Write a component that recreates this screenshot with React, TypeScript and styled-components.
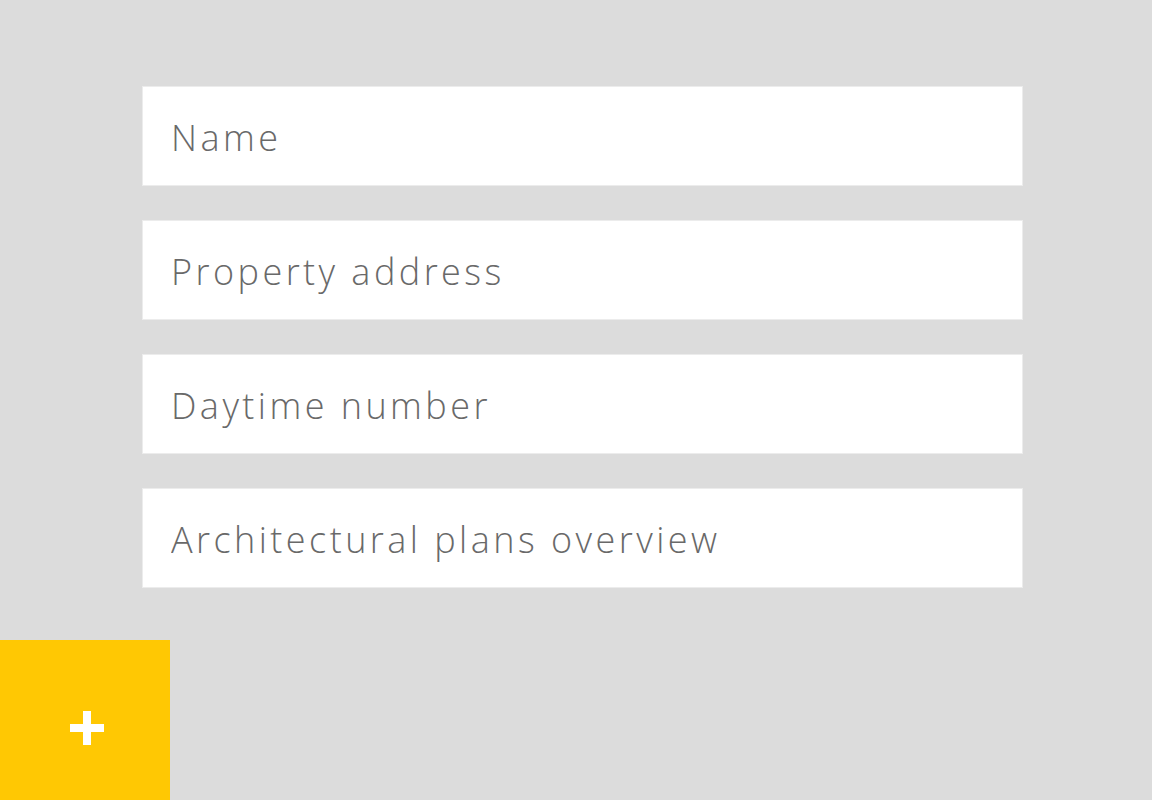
import React from "react";
import styled, { createGlobalStyle } from "styled-components";

const GlobalStyle = createGlobalStyle`
  html, body {
    margin: 0;
    padding: 0;
    background: #dcdcdc;
  }
  body {
    font-family: "Open Sans", "Liberation Sans", sans-serif;
  }
`;

const Page = styled.div`
  min-height: 800px;
  display: flex;
  flex-direction: column;
  background: #dcdcdc;
`;

const Form = styled.form`
  display: flex;
  flex-direction: column;
  gap: 34px;
  width: 880px;
  padding: 86px 0 0 142px;
  margin: 0;
`;

const Field = styled.input`
  box-sizing: border-box;
  width: 881px;
  height: 100px;
  margin: 0;
  padding: 2px 0 0 28px;
  border: 1px solid #ececec;
  background: #ffffff;
  outline: none;
  font-family: "Open Sans", "Liberation Sans", sans-serif;
  font-size: 36px;
  font-weight: 350;
  letter-spacing: 3.45px;
  color: #696969;

  &::placeholder {
    color: #696969;
    opacity: 1;
  }
`;

const AddButton = styled.button`
  margin-top: 52px;
  width: 170px;
  height: 160px;
  border: none;
  padding: 16px 0 0 4px;
  box-sizing: border-box;
  background: #ffc803;
  display: flex;
  align-items: center;
  justify-content: center;
  cursor: pointer;
`;

const PlusIcon = () => (
  <svg width="34" height="34" viewBox="0 0 34 34" aria-hidden="true">
    <rect x="13" y="0" width="8" height="34" fill="#ffffff" />
    <rect x="0" y="13" width="34" height="8" fill="#ffffff" />
  </svg>
);

const fields = [
  "Name",
  "Property address",
  "Daytime number",
  "Architectural plans overview",
];

export default function App() {
  return (
    <Page>
      <GlobalStyle />
      <Form onSubmit={(e) => e.preventDefault()}>
        {fields.map((f) => (
          <Field key={f} type="text" placeholder={f} />
        ))}
      </Form>
      <AddButton type="button" aria-label="Add">
        <PlusIcon />
      </AddButton>
    </Page>
  );
}
